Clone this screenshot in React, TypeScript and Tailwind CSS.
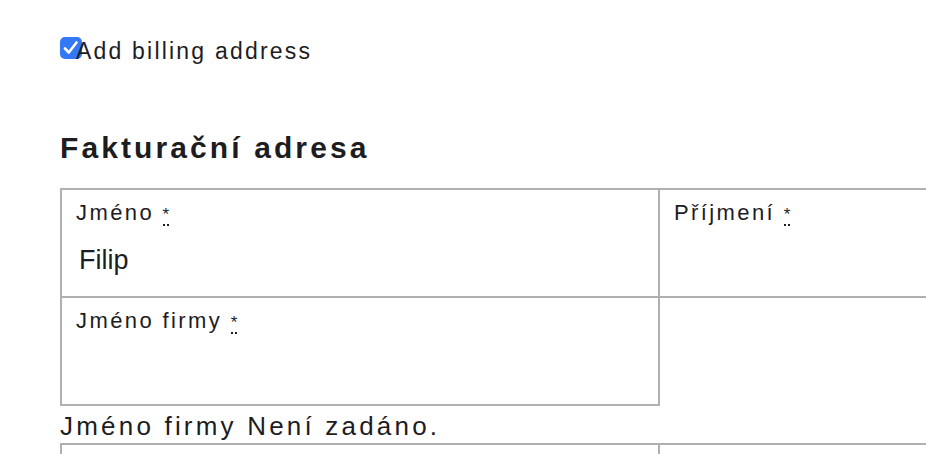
import React from "react";

const Cell = ({ label, value, className = "" }: { label?: string; value?: string; className?: string }) => (
  <div className={`h-[110px] w-[600px] border-2 border-[#b0b0b0] px-[14px] pt-[11px] ${className}`}>
    {label && (
      <div className="text-[22px] leading-[24px] tracking-[2.4px] text-[#1d1d1f]">
        {label}{" "}
        <abbr title="required" className="no-underline border-b-2 border-dotted border-[#1d1d1f] text-[17px] leading-[14px] tracking-normal">
          *
        </abbr>
      </div>
    )}
    {value && <div className="mt-[20px] pl-[3px] text-[27px] leading-[30px] text-[#1d1d1f]">{value}</div>}
  </div>
);

export default function App() {
  return (
    <div className="w-[926px] h-[454px] overflow-hidden bg-white pl-[60px] pt-[37px] font-['Liberation_Sans',Arial,sans-serif] text-[#1d1d1f]">
      <label className="flex items-center h-[22px]">
        <span className="flex h-[22px] w-[22px] shrink-0 items-center justify-center rounded-[5px] bg-[#3478f6]">
          <svg width="22" height="22" viewBox="0 0 22 22" fill="none">
            <path d="M5 11.5 L8.8 15.5 L16.5 5.5" stroke="white" strokeWidth="2.6" strokeLinecap="round" strokeLinejoin="round" />
          </svg>
        </span>
        <span className="-ml-[6px] pt-[6px] text-[23px] leading-[26px] tracking-[2.2px]">Add billing address</span>
      </label>

      <h2 className="mt-[72px] text-[30px] leading-[34px] font-bold tracking-[3.1px]">Fakturační adresa</h2>

      <div className="mt-[23px] w-[1300px]">
        <div className="flex">
          <Cell label="Jméno" value="Filip" />
          <Cell label="Příjmení" className="-ml-[2px]" />
        </div>
        <div className="flex -mt-[2px]">
          <Cell label="Jméno firmy" />
        </div>
        <p className="pt-[5px] pb-[2px] text-[26px] leading-[30px] tracking-[3.2px]">Jméno firmy Není zadáno.</p>
        <div className="flex">
          <Cell />
          <Cell className="-ml-[2px]" />
        </div>
      </div>
    </div>
  );
}
